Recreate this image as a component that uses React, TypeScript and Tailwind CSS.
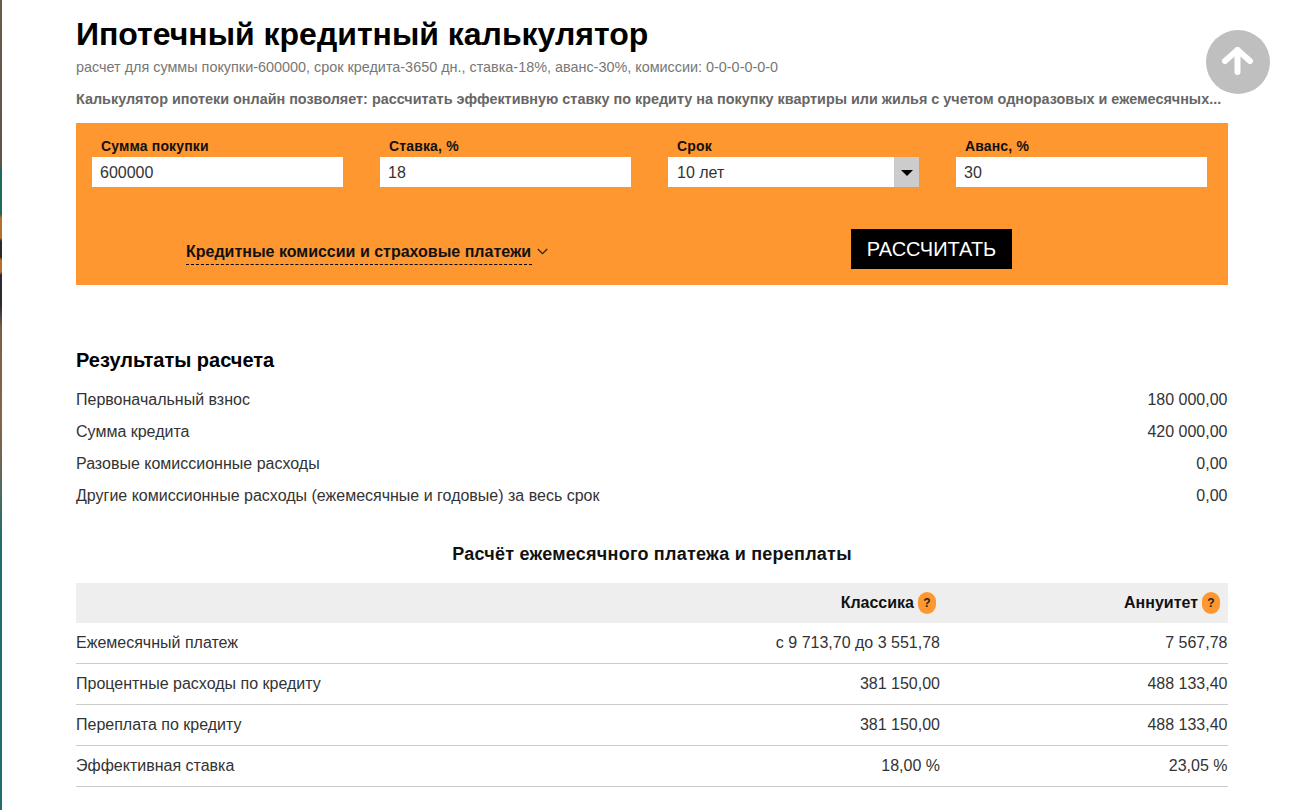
const summaryRows = [
  { label: "Первоначальный взнос", value: "180 000,00" },
  { label: "Сумма кредита", value: "420 000,00" },
  { label: "Разовые комиссионные расходы", value: "0,00" },
  { label: "Другие комиссионные расходы (ежемесячные и годовые) за весь срок", value: "0,00" },
];

const paymentRows = [
  { label: "Ежемесячный платеж", classic: "с 9 713,70 до 3 551,78", annuity: "7 567,78" },
  { label: "Процентные расходы по кредиту", classic: "381 150,00", annuity: "488 133,40" },
  { label: "Переплата по кредиту", classic: "381 150,00", annuity: "488 133,40" },
  { label: "Эффективная ставка", classic: "18,00 %", annuity: "23,05 %" },
];

function Field({ label, value }: { label: string; value: string }) {
  return (
    <div>
      <div className="h-[34px] pt-[15px] pl-[9px] text-[14px] leading-[16px] font-bold tracking-[0.15px] text-[#111]">{label}</div>
      <div className="h-[30px] bg-white pl-[8px] text-[16px] leading-[31px] text-[#333]">{value}</div>
    </div>
  );
}

function Hint() {
  return (
    <span className="ml-[4px] flex h-[22px] w-[18px] items-center justify-center rounded-full bg-[#ff9730] text-[12px] font-bold text-[#222]">
      ?
    </span>
  );
}

export default function App() {
  return (
    <div className="relative h-[810px] overflow-hidden bg-white font-['Liberation_Sans',Arial,sans-serif]">
      <div className="absolute top-0 bottom-0 left-0 w-[2px] bg-[linear-gradient(180deg,#6b5b4b_0px,#5f5548_164px,#1f6a58_170px,#1f6a58_214px,#b5702f_218px,#b5702f_238px,#2a2a2a_241px,#2a2a2a_257px,#b5702f_260px,#b5702f_272px,#2a2a30_275px,#2a2a30_305px,#7a5f48_328px,#8a6248_420px,#5a6a5c_480px,#256d6b_540px,#256d6b_810px)]" />
      <button className="absolute top-[30px] left-[1206px] flex h-16 w-16 items-center justify-center rounded-full bg-[#bfbfbf]">
        <svg width="34" height="34" viewBox="0 0 34 34" fill="none" stroke="white" strokeWidth="6" strokeLinecap="round" strokeLinejoin="round">
          <path d="M16.5 27V5" />
          <path d="M4 16 16.5 5 29 16" />
        </svg>
      </button>

      <div className="mx-[76px] w-[1152px]">
        <h1 className="pt-[14px] text-[32px] leading-[40px] font-bold text-black">Ипотечный кредитный калькулятор</h1>
        <p className="mt-[3px] text-[14.4px] leading-[20px] text-[#777]">
          расчет для суммы покупки-600000, срок кредита-3650 дн., ставка-18%, аванс-30%, комиссии: 0-0-0-0-0-0
        </p>
        <p className="mt-[12px] w-[1152px] truncate text-[14.4px] leading-[20px] font-bold text-[#666]">
          Калькулятор ипотеки онлайн позволяет: рассчитать эффективную ставку по кредиту на покупку квартиры или жилья с учетом одноразовых и ежемесячных...
        </p>

        <form className="mt-[14px] h-[162px] bg-[#ff9730] pr-[21px] pl-[16px]">
          <div className="grid grid-cols-4 gap-x-[37px]">
            <Field label="Сумма покупки" value="600000" />
            <Field label="Ставка, %" value="18" />
            <div>
              <div className="h-[34px] pt-[15px] pl-[9px] text-[14px] leading-[16px] font-bold tracking-[0.15px] text-[#111]">Срок</div>
              <div className="flex h-[30px] bg-white pl-[9px] text-[16px] leading-[31px] text-[#333]">
                <span className="flex-1">10 лет</span>
                <span className="flex w-[25px] items-center justify-center bg-[#cccccc]">
                  <span className="mt-[1px] h-0 w-0 border-x-[6px] border-t-[6px] border-x-transparent border-t-black" />
                </span>
              </div>
            </div>
            <Field label="Аванс, %" value="30" />
          </div>
          <div className="mt-[42px] flex">
            <div className="mt-[12px] ml-[94px] flex w-[362px] items-start">
              <span className="h-[24px] w-[346px] border-b border-dashed border-black pt-[1px] text-[16px] leading-[20px] font-bold whitespace-nowrap text-[#111]">
                Кредитные комиссии и страховые платежи
              </span>
              <svg className="mt-[7px] ml-[5px]" width="11" height="7" viewBox="0 0 11 7" fill="none" stroke="#222" strokeWidth="1.2">
                <path d="M.8 1 5.5 5.6 10.2 1" />
              </svg>
            </div>
            <button type="button" className="ml-[303px] h-[40px] w-[161px] bg-black text-[20px] text-white">
              РАССЧИТАТЬ
            </button>
          </div>
        </form>

        <h2 className="mt-[64px] text-[20px] leading-[22px] font-bold text-black">Результаты расчета</h2>
        <div className="mt-[13px] text-[16px] text-[#333]">
          {summaryRows.map((row) => (
            <div key={row.label} className="flex h-[32px] items-center justify-between pr-[0.5px]">
              <span>{row.label}</span>
              <span>{row.value}</span>
            </div>
          ))}
        </div>

        <h3 className="mt-[32px] text-center text-[18px] leading-[20px] font-bold tracking-[0.24px] text-[#111]">
          Расчёт ежемесячного платежа и переплаты
        </h3>
        <div className="mt-[19px] text-[16px] text-[#333]">
          <div className="flex h-[40px] items-center bg-[#eeeeee] text-[16px] font-bold text-[#111]">
            <div className="flex w-[860px] items-center justify-end">
              Классика
              <Hint />
            </div>
            <div className="flex w-[284px] items-center justify-end">
              Аннуитет
              <Hint />
            </div>
          </div>
          {paymentRows.map((row) => (
            <div key={row.label} className="flex h-[41px] items-center border-b border-[#cccccc] pr-[0.5px]">
              <span className="w-[564px]">{row.label}</span>
              <span className="w-[300px] text-right">{row.classic}</span>
              <span className="flex-1 text-right">{row.annuity}</span>
            </div>
          ))}
        </div>
      </div>
    </div>
  );
}
